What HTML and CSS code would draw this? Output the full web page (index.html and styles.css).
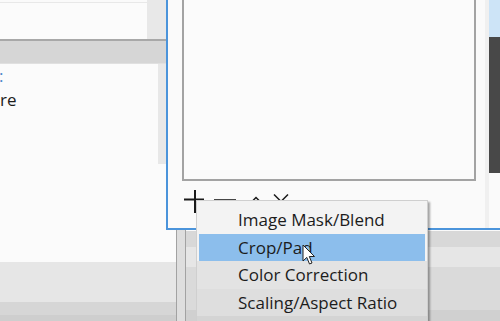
FILE: index.html
```html
<!DOCTYPE html>
<html lang="en">
<head>
    <meta charset="UTF-8">
    <meta name="viewport" content="width=device-width, initial-scale=1.0">
    <title>Filters</title>
    <link rel="stylesheet" href="styles.css">
</head>
<body>
    <div class="desktop">
        <div class="app-left">
            <div class="top-row">
                <div class="top-box"></div>
                <div class="top-scroll"></div>
            </div>
            <div class="tab-bar"></div>
            <div class="content-row">
                <div class="content">
                    <div class="line link">:</div>
                    <div class="line">re</div>
                </div>
                <div class="content-scroll"></div>
            </div>
            <div class="status status-a"></div>
            <div class="status status-b"></div>
            <div class="status status-c"></div>
        </div>
        <div class="app-right">
            <div class="splitter"></div>
            <div class="right-body">
                <div class="band band-top"></div>
                <div class="band band-a"></div>
                <div class="band band-b"></div>
                <div class="band band-c"></div>
                <div class="band band-d"></div>
            </div>
        </div>
    </div>

    <!-- filters dialog window -->
    <div class="dialog">
        <div class="dialog-main">
            <div class="filter-list"></div>
            <div class="toolbar">
                <svg class="tool-plus" width="20" height="23" viewBox="0 0 20 23">
                    <path d="M11 0V23M0 9.5H20" stroke="#1a1a1a" stroke-width="2" fill="none"/>
                </svg>
                <svg class="tool-minus" width="22" height="4" viewBox="0 0 22 4">
                    <path d="M0 2H22" stroke="#1a1a1a" stroke-width="1.6" fill="none"/>
                </svg>
                <svg class="tool-up" width="16" height="9" viewBox="0 0 16 9">
                    <path d="M1 8.5L8 1.5L15 8.5" stroke="#1a1a1a" stroke-width="1.5" fill="none"/>
                </svg>
                <svg class="tool-down" width="16" height="9" viewBox="0 0 16 9">
                    <path d="M1 0.5L8 7.5L15 0.5" stroke="#1a1a1a" stroke-width="1.5" fill="none"/>
                </svg>
            </div>
        </div>
        <div class="dialog-side">
            <div class="side-blue"></div>
            <div class="side-dark"></div>
        </div>
    </div>

    <!-- add filter popup menu -->
    <div class="menu">
        <div class="menu-item">Image Mask/Blend</div>
        <div class="menu-item active">Crop/Pad</div>
        <div class="menu-item dim">Color Correction</div>
        <div class="menu-item dimmer">Scaling/Aspect Ratio</div>
        <div class="menu-item dimmest"></div>
    </div>

    <svg class="cursor" width="14" height="22" viewBox="0 0 14 22">
        <path d="M1 1V17L4.8 13.4L7.5 20L10 19L7.3 12.5H12.5Z" fill="#fff" stroke="#222" stroke-width="1" stroke-linejoin="round"/>
    </svg>
</body>
</html>
```

FILE: styles.css
```css
body {
    margin: 0;
    width: 500px;
    height: 321px;
    overflow: hidden;
    position: relative;
    background-color: #fafafa;
    font-family: "Open Sans", "Noto Sans", Arial, sans-serif;
    color: #1c1c1c;
}

.desktop {
    display: flex;
    height: 321px;
}

.app-left {
    width: 176px;
    display: flex;
    flex-direction: column;
}

.top-row {
    height: 39px;
    display: flex;
}

.top-box {
    width: 147px;
    margin-top: 2px;
    border-top: 1px solid #e8e8e8;
    background-color: #fbfbfb;
}

.top-scroll {
    flex: 1;
    background-color: #e8e8e8;
}

.tab-bar {
    height: 22px;
    border-top: 2px solid #a8a8a8;
    border-bottom: 1px solid #e0e0e0;
    background-color: #d6d6d6;
}

.content-row {
    height: 198px;
    display: flex;
    align-items: flex-start;
    background-color: #fbfbfb;
}

.content {
    flex: 1;
    font-size: 17px;
}

.line {
    height: 24px;
    line-height: 24px;
    white-space: nowrap;
}

.link {
    color: #4a86c8;
    text-indent: -1px;
}

.content-scroll {
    width: 8px;
    height: 100px;
    margin-right: 10px;
    background-color: #e8e8e8;
}

.status {
    flex: none;
}

.status-a {
    height: 40px;
    background-color: #e6e6e6;
}

.status-b {
    height: 13px;
    background-color: #d6d6d6;
}

.status-c {
    flex: 1;
    background-color: #cecece;
}

.app-right {
    flex: 1;
    display: flex;
    border-left: 1px solid #a2a2a2;
}

.splitter {
    width: 8px;
    border-right: 1px solid #a2a2a2;
    background-color: #dedede;
}

.right-body {
    flex: 1;
    display: flex;
    flex-direction: column;
}

.band-top {
    height: 231px;
}

.band-a {
    height: 16px;
    background-color: #d8d8d8;
}

.band-b {
    height: 20px;
    background-color: #e6e6e6;
}

.band-c {
    height: 43px;
    background-color: #dadada;
}

.band-d {
    flex: 1;
    background-color: #d0d0d0;
}

.dialog {
    position: absolute;
    left: 166px;
    top: -20px;
    width: 360px;
    height: 248px;
    display: flex;
    padding-left: 14px;
    background-color: #fafafa;
    border-left: 2px solid #4b94db;
    border-bottom: 2px solid #4b94db;
}

.dialog-main {
    width: 294px;
    display: flex;
    flex-direction: column;
}

.filter-list {
    height: 199px;
    border: 2px solid #a3a3a3;
    border-top: none;
    background-color: #fbfbfb;
}

.toolbar {
    display: flex;
    align-items: flex-start;
    padding-top: 9px;
    padding-left: 2px;
}

.tool-plus {
    margin-right: 10px;
}

.tool-minus {
    margin-top: 8px;
    margin-right: 12px;
}

.tool-up {
    margin-top: 6px;
    margin-right: 9px;
}

.tool-down {
    margin-top: 4px;
}

.dialog-side {
    margin-left: 9px;
    width: 20px;
    display: flex;
    flex-direction: column;
    border-left: 4px solid #f0f0f0;
}

.side-blue {
    height: 57px;
    background-color: #cde4f7;
}

.side-dark {
    height: 136px;
    background-color: #484848;
}

.menu {
    position: absolute;
    left: 196px;
    top: 200px;
    width: 232px;
    height: 150px;
    padding: 5px 2px 0;
    box-sizing: border-box;
    border: 1px solid #cfcfcf;
    background-color: #f3f3f3;
    box-shadow: 2px 2px 2px rgba(0, 0, 0, 0.35);
    font-size: 17px;
}

.menu-item {
    height: 27.5px;
    line-height: 27px;
    padding-left: 39px;
    white-space: nowrap;
}

.active {
    background-color: #8cbeec;
}

.dim,
.dimmer,
.dimmest {
    margin: 0 -2px;
    padding-left: 41px;
}

.dim {
    background-color: #e3e3e3;
}

.dimmer {
    background-color: #dedede;
}

.dimmest {
    background-color: #d4d4d4;
}

.cursor {
    position: absolute;
    left: 302px;
    top: 244px;
}
```
